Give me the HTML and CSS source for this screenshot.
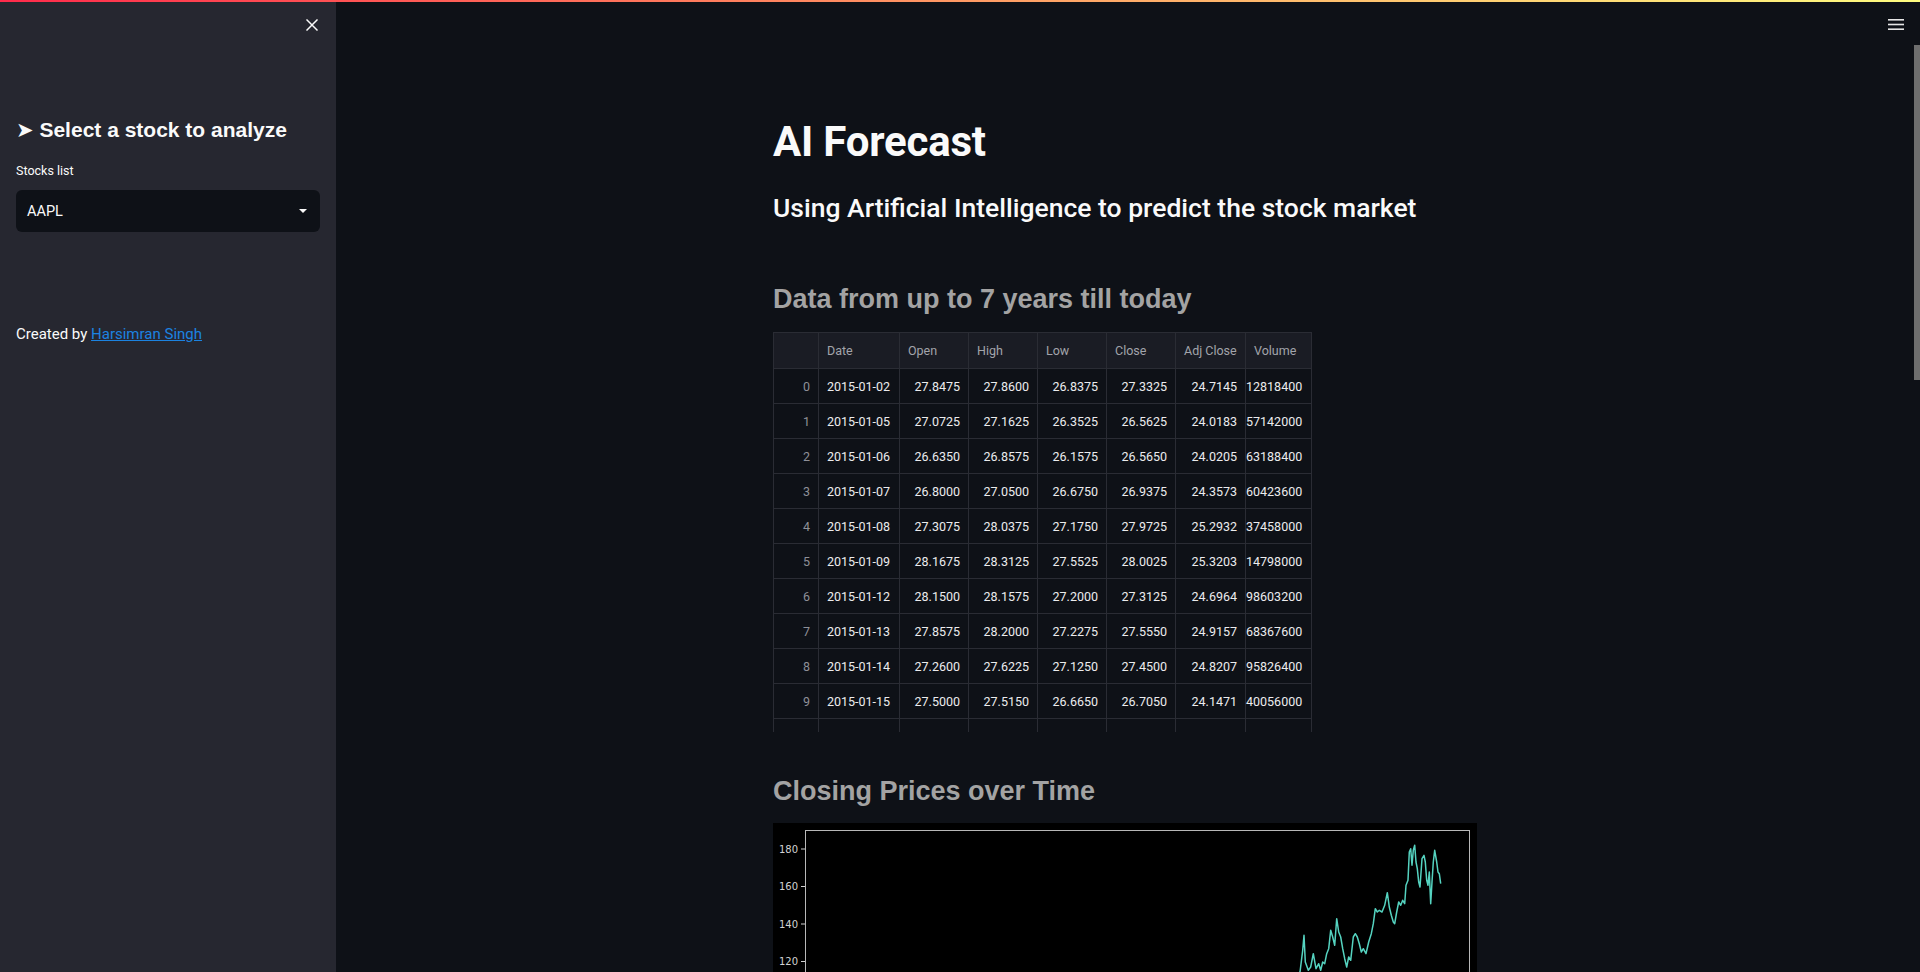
FILE: index.html
```html
<!DOCTYPE html>
<html lang="en">
<head>
<meta charset="utf-8">
<title>AI Forecast</title>
<link rel="stylesheet" href="styles.css">
</head>
<body>
<div class="decoration"></div>
<div class="app">
  <aside class="sidebar">
    <div class="sidebar-header">
      <button class="close-btn" aria-label="Close sidebar">
        <svg width="12" height="12" viewBox="0 0 12 12"><path d="M1 1 L11 11 M11 1 L1 11" stroke="#fafafa" stroke-width="1.5" stroke-linecap="square"/></svg>
      </button>
    </div>
    <div class="sidebar-content">
      <h3 class="side-title">➤ Select a stock to analyze</h3>
      <label class="field-label">Stocks list</label>
      <div class="select">
        <span class="select-value">AAPL</span>
        <svg class="caret" width="8" height="5" viewBox="0 0 8 5"><polygon points="0,0 8,0 4,4" fill="#fafafa"/></svg>
      </div>
      <p class="credit">Created by <a href="#">Harsimran Singh</a></p>
    </div>
  </aside>

  <main class="main">
    <div class="content">
      <h1 class="title">AI Forecast</h1>
      <h3 class="subtitle">Using Artificial Intelligence to predict the stock market</h3>

      <h2 class="section-title section-first">Data from up to 7 years till today</h2>
      <div class="df">
        <table>
          <thead>
            <tr>
              <th class="c-idx"></th><th class="c-date">Date</th><th class="c-n">Open</th><th class="c-n">High</th><th class="c-n">Low</th><th class="c-n">Close</th><th class="c-adj">Adj Close</th><th class="c-vol">Volume</th>
            </tr>
          </thead>
          <tbody>
            <tr><td class="idx">0</td><td class="date">2015-01-02</td><td class="num">27.8475</td><td class="num">27.8600</td><td class="num">26.8375</td><td class="num">27.3325</td><td class="num">24.7145</td><td class="vol">12818400</td></tr>
            <tr><td class="idx">1</td><td class="date">2015-01-05</td><td class="num">27.0725</td><td class="num">27.1625</td><td class="num">26.3525</td><td class="num">26.5625</td><td class="num">24.0183</td><td class="vol">57142000</td></tr>
            <tr><td class="idx">2</td><td class="date">2015-01-06</td><td class="num">26.6350</td><td class="num">26.8575</td><td class="num">26.1575</td><td class="num">26.5650</td><td class="num">24.0205</td><td class="vol">63188400</td></tr>
            <tr><td class="idx">3</td><td class="date">2015-01-07</td><td class="num">26.8000</td><td class="num">27.0500</td><td class="num">26.6750</td><td class="num">26.9375</td><td class="num">24.3573</td><td class="vol">60423600</td></tr>
            <tr><td class="idx">4</td><td class="date">2015-01-08</td><td class="num">27.3075</td><td class="num">28.0375</td><td class="num">27.1750</td><td class="num">27.9725</td><td class="num">25.2932</td><td class="vol">37458000</td></tr>
            <tr><td class="idx">5</td><td class="date">2015-01-09</td><td class="num">28.1675</td><td class="num">28.3125</td><td class="num">27.5525</td><td class="num">28.0025</td><td class="num">25.3203</td><td class="vol">14798000</td></tr>
            <tr><td class="idx">6</td><td class="date">2015-01-12</td><td class="num">28.1500</td><td class="num">28.1575</td><td class="num">27.2000</td><td class="num">27.3125</td><td class="num">24.6964</td><td class="vol">98603200</td></tr>
            <tr><td class="idx">7</td><td class="date">2015-01-13</td><td class="num">27.8575</td><td class="num">28.2000</td><td class="num">27.2275</td><td class="num">27.5550</td><td class="num">24.9157</td><td class="vol">68367600</td></tr>
            <tr><td class="idx">8</td><td class="date">2015-01-14</td><td class="num">27.2600</td><td class="num">27.6225</td><td class="num">27.1250</td><td class="num">27.4500</td><td class="num">24.8207</td><td class="vol">95826400</td></tr>
            <tr><td class="idx">9</td><td class="date">2015-01-15</td><td class="num">27.5000</td><td class="num">27.5150</td><td class="num">26.6650</td><td class="num">26.7050</td><td class="num">24.1471</td><td class="vol">40056000</td></tr>
            <tr><td class="idx"></td><td class="date"></td><td class="num"></td><td class="num"></td><td class="num"></td><td class="num"></td><td class="num"></td><td class="vol"></td></tr>
          </tbody>
        </table>
      </div>

      <h2 class="section-title section-next">Closing Prices over Time</h2>
      <div class="chart">
        <svg width="704" height="360" viewBox="0 0 704 360">
          <rect x="32.5" y="7.5" width="664" height="329" fill="none" stroke="#b8b8b8" stroke-width="1"/>
          <g stroke="#cfcfcf" stroke-width="1">
            <line x1="28" y1="26" x2="32" y2="26"/>
            <line x1="28" y1="63.5" x2="32" y2="63.5"/>
            <line x1="28" y1="101" x2="32" y2="101"/>
            <line x1="28" y1="138.5" x2="32" y2="138.5"/>
            <line x1="28" y1="176" x2="32" y2="176"/>
            <line x1="28" y1="213.5" x2="32" y2="213.5"/>
            <line x1="28" y1="251" x2="32" y2="251"/>
            <line x1="28" y1="288.5" x2="32" y2="288.5"/>
            <line x1="28" y1="326" x2="32" y2="326"/>
          </g>
          <g class="tick-labels" text-anchor="end">
            <text x="25" y="29.5">180</text>
            <text x="25" y="67">160</text>
            <text x="25" y="104.5">140</text>
            <text x="25" y="142">120</text>
            <text x="25" y="179.5">100</text>
            <text x="25" y="217">80</text>
            <text x="25" y="254.5">60</text>
            <text x="25" y="292">40</text>
            <text x="25" y="329.5">20</text>
          </g>
          <polyline fill="none" stroke="#55d3c0" stroke-width="1.5" stroke-linejoin="round" points="65,313 72,310 80,308 88,305 95,303 102,306 110,301 118,304 125,307 132,309 140,312 146,316 152,318 160,317 168,314 175,316 182,318 190,316 198,313 205,312 212,311 220,309 228,308 235,306 242,304 250,300 258,298 265,295 272,293 280,290 288,286 295,283 302,282 310,284 318,282 325,283 332,279 340,275 348,268 355,264 362,262 370,260 375,270 380,284 385,292 390,290 396,284 402,280 410,275 418,272 425,268 432,265 440,260 448,252 455,244 462,236 468,230 474,224 478,230 482,245 486,256 490,250 495,233 500,222 505,205 510,195 515,186 520,170 524,160 527,149 529.7,127.3 531,112.3 532.3,139 535.3,147.3 537.7,144 540.3,130.7 543,145.7 545.7,140.7 547.7,147.3 549.7,139 551.7,140.7 553.7,130.7 555.7,125.7 557.7,107.3 559.7,114 561.7,122.3 563.7,95.7 565.7,109 567.7,114 569.7,125.7 571.7,135.7 573.7,144 575.7,134 577.7,137.3 580.3,114 582.3,110.7 584.3,114 586.3,120.7 588.3,129 590.3,125.7 593,130.7 595.7,119 598.3,110.7 600.3,100.7 602.3,85.7 604.3,89 606.3,87.3 609,89 611.7,82.3 614.3,69.7 616.3,84 618.3,92.3 620.3,99 621.7,100.7 623.7,89 625.7,79 627.7,82.3 629.7,77.3 631.7,80.7 633,62.3 635,57.3 636.3,29 637.7,25.7 639,42.3 640.3,27.3 641.7,22.3 643,39 644.3,45.7 645.7,59 647,64 649,35.7 651,32.3 652.3,39 653.7,57.3 655,62.3 656.3,49 657.7,80.7 659,59 660.3,39 661.7,27.3 663.7,39 665,49 666.3,50.7 667.7,60.7"/>
        </svg>
      </div>
    </div>
  </main>
</div>
<div class="menu-btn" aria-label="Main menu">
  <svg width="16" height="12" viewBox="0 0 16 12"><rect x="0" y="0" width="16" height="1.6" fill="#e6e6e6"/><rect x="0" y="4.7" width="16" height="1.6" fill="#e6e6e6"/><rect x="0" y="9.4" width="16" height="1.6" fill="#e6e6e6"/></svg>
</div>
<div class="scroll-thumb"></div>
</body>
</html>
```

FILE: styles.css
```css
* { box-sizing: border-box; }

html, body {
  margin: 0;
  height: 100%;
  background: #0e1117;
  color: #fafafa;
  font-family: Roboto, "Noto Sans", sans-serif;
  overflow: hidden;
}

.decoration {
  position: fixed;
  top: 0;
  left: 0;
  right: 0;
  height: 2px;
  background: linear-gradient(90deg, rgb(255, 43, 75), rgb(255, 164, 102) 55%, rgb(255, 253, 128));
  z-index: 10;
}

.app {
  display: flex;
  height: 100vh;
}

/* Sidebar */
.sidebar {
  flex: 0 0 336px;
  width: 336px;
  background: #262730;
  height: 100%;
}

.sidebar-header {
  display: flex;
  justify-content: flex-end;
  padding: 19px 18px 0 0;
}

.close-btn {
  width: 12px;
  height: 12px;
  padding: 0;
  border: 0;
  background: none;
  display: block;
  line-height: 0;
}

.sidebar-content {
  padding: 0 16px;
}

.side-title {
  margin: 86px 0 0;
  font-family: "Liberation Sans", "DejaVu Sans", Arial, sans-serif;
  font-weight: 700;
  font-size: 21px;
  line-height: 25px;
  color: #fafafa;
  white-space: nowrap;
}

.field-label {
  display: block;
  margin-top: 21px;
  font-size: 12.5px;
  line-height: 16px;
  color: #fafafa;
}

.select {
  margin-top: 11px;
  height: 42px;
  background: #0e1117;
  border-radius: 6px;
  display: flex;
  justify-content: space-between;
  align-items: flex-start;
  padding: 12px 13px 0 11px;
}

.select-value {
  font-size: 14.5px;
  line-height: 20px;
}

.caret {
  margin-top: 7px;
}

.credit {
  margin: 91px 0 0;
  font-size: 15px;
  line-height: 22px;
  color: #fafafa;
}

.credit a {
  color: #1c83e1;
  text-decoration: underline;
}

/* Main */
.main {
  flex: 1;
  height: 100%;
  overflow-y: auto;
  scrollbar-width: none;
  padding-right: 6px;
}

.main::-webkit-scrollbar { display: none; }

.content {
  width: 704px;
  margin: 0 auto;
  padding: 117px 0 1500px;
}

.title {
  margin: 0;
  font-size: 42px;
  font-weight: 700;
  line-height: 49px;
  letter-spacing: -0.2px;
}

.subtitle {
  margin: 27px 0 0;
  font-size: 26.5px;
  font-weight: 500;
  line-height: 30px;
}

.section-title {
  margin: 0 0 17px;
  font-family: "Liberation Sans", Arial, sans-serif;
  font-weight: 700;
  font-size: 27px;
  line-height: 32px;
  color: #a3a3a3;
}

.section-first { margin-top: 60px; }
.section-next { margin-top: 43px; margin-bottom: 16px; }

/* Dataframe */
.df {
  width: 539px;
  height: 400px;
  overflow: hidden;
  border-left: 1px solid #2a2c34;
  border-top: 1px solid #2a2c34;
}

.df table {
  table-layout: fixed;
  width: 538px;
  border-spacing: 0;
  font-size: 12.5px;
}

.df th,
.df td {
  border-right: 1px solid #2a2c34;
  border-bottom: 1px solid #2a2c34;
  white-space: nowrap;
  padding: 0 8px;
}

.df thead tr { height: 36px; }
.df tbody tr { height: 35px; }

.df th {
  background: #1a1c24;
  color: #a2a4ab;
  font-weight: 400;
  text-align: left;
}

.c-idx { width: 45px; }
.c-date { width: 81px; }
.c-n { width: 69px; }
.c-adj { width: 70px; padding: 0 4px 0 7px; }
.c-vol { width: 66px; }

.df td { color: #ececee; }

.df td.idx {
  text-align: right;
  color: #8e9098;
}

.df td.num { text-align: right; }

.df td.vol {
  text-align: right;
  padding: 0 9px 0 0;
}

/* Chart */
.chart {
  width: 704px;
  height: 360px;
  background: #000;
}

.chart svg { display: block; }

.tick-labels text {
  font-family: "DejaVu Sans", sans-serif;
  font-size: 10px;
  fill: #d2d2d2;
}

/* Header overlays */
.menu-btn {
  position: fixed;
  top: 19px;
  right: 16px;
  line-height: 0;
}

.scroll-thumb {
  position: fixed;
  top: 45px;
  right: 0;
  width: 6px;
  height: 335px;
  background: #6e6e6e;
}
```
